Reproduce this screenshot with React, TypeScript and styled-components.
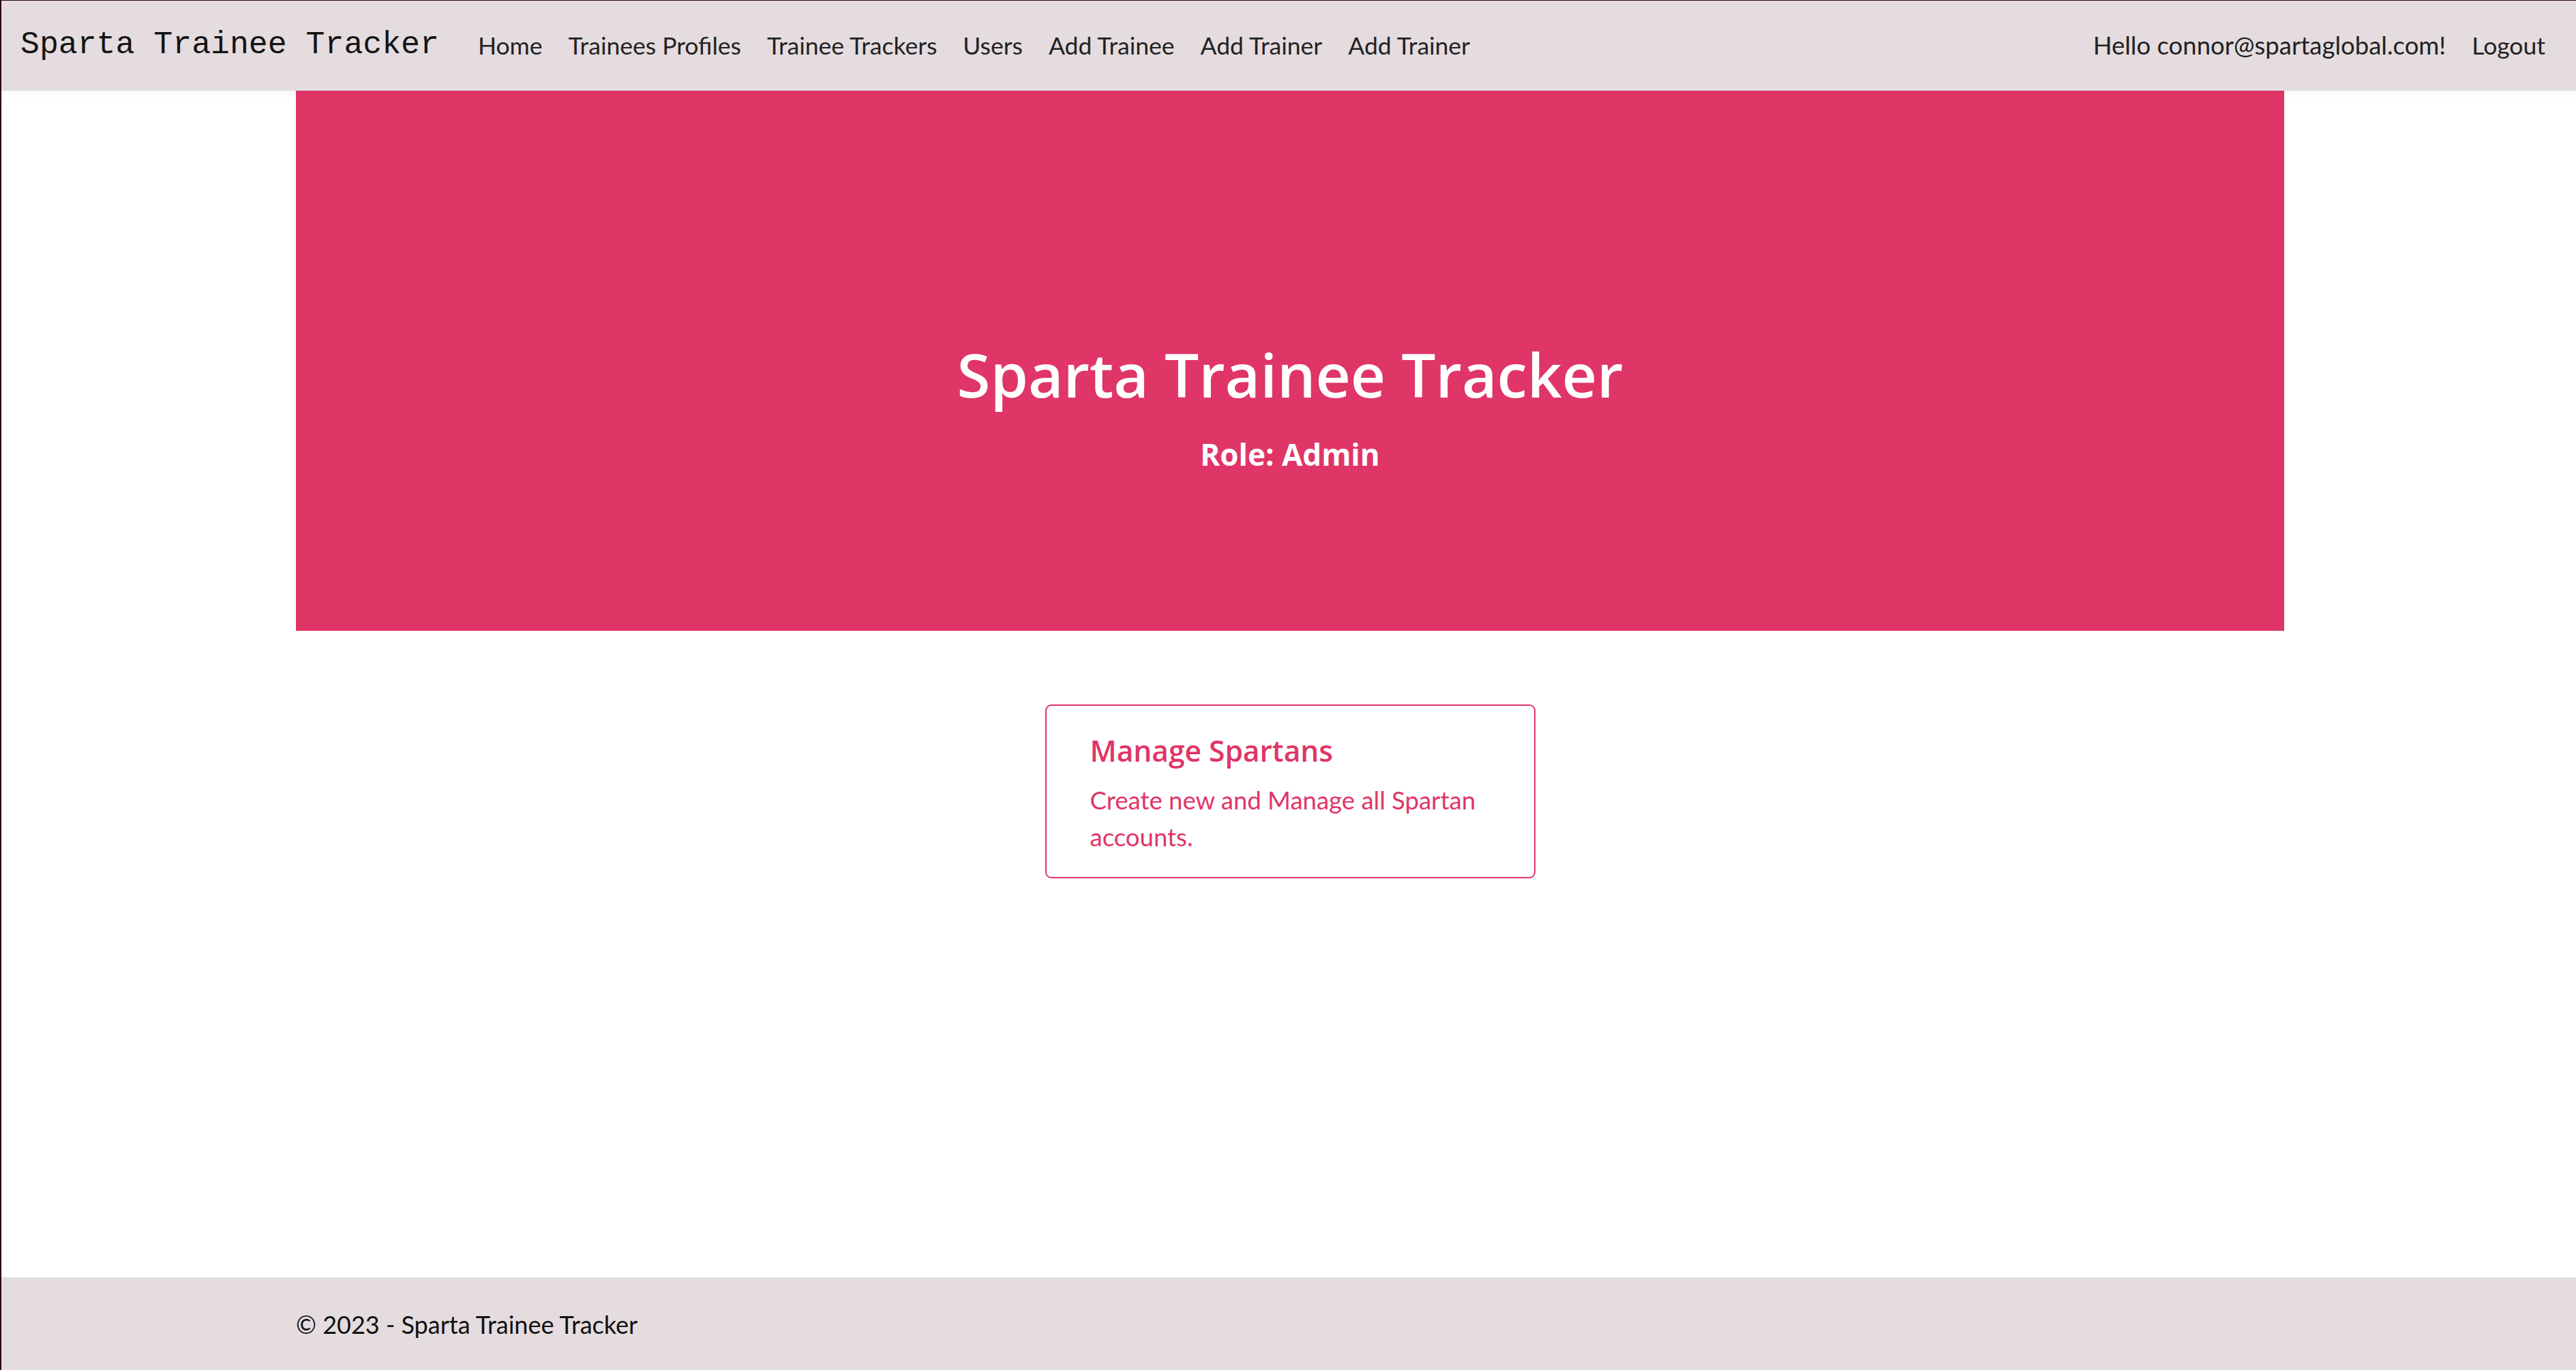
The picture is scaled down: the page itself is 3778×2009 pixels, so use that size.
import React from "react";
import styled, { createGlobalStyle } from "styled-components";

const GlobalStyle = createGlobalStyle`
  html, body { margin: 0; padding: 0; background: #ffffff; }
  body { font-family: "Lato", "Open Sans", sans-serif; }
  * { box-sizing: border-box; }
`;

const Page = styled.div`
  min-height: 2009px;
  display: flex;
  flex-direction: column;
  border-left: 2px solid #2a0606;
  border-top: 1px solid #2a0606;
`;

const Navbar = styled.nav`
  height: 132px;
  display: flex;
  align-items: center;
  padding: 0 26px 0 28px;
  background: #e4dcdf;
  border-bottom: 1px solid #d6dbe3;
  box-shadow: 0 4px 14px rgba(0, 0, 0, 0.04);
  position: relative;
  z-index: 1;
`;

const Brand = styled.a`
  font-family: "Liberation Mono", "DejaVu Sans Mono", monospace;
  font-size: 46.5px;
  color: #141414;
  margin-right: 38px;
  text-decoration: none;
  line-height: 1;
`;

const NavList = styled.ul`
  display: flex;
  list-style: none;
  margin: 0;
  padding: 0;
  align-items: center;
`;

const RightList = styled(NavList)`
  margin-left: auto;
`;

const NavLink = styled.a<{ $wide?: boolean }>`
  display: block;
  padding: 0 19px;
  font-family: "Lato", "Open Sans", sans-serif;
  font-size: ${(p) => (p.$wide ? "36.5px" : "35.5px")};
  color: #222;
  text-decoration: none;
  line-height: 1.5;
`;

const Main = styled.main`
  flex: 1;
  width: 2916px;
  margin: 0 0 0 calc(50% - 1456px);
  display: flex;
  flex-direction: column;
  align-items: center;
`;

const Hero = styled.section`
  align-self: stretch;
  height: 792px;
  background: #e03567;
  color: #fff;
  display: flex;
  flex-direction: column;
  align-items: center;
  justify-content: flex-start;
  padding-top: 363px;
`;

const HeroTitle = styled.h1`
  margin: 0;
  font-family: "Open Sans", sans-serif;
  font-size: 89px;
  font-weight: 600;
  line-height: 1.2;
`;

const HeroRole = styled.h5`
  margin: 37px 0 0;
  font-family: "Open Sans", sans-serif;
  font-size: 44px;
  font-weight: 700;
  line-height: 1.2;
`;

const Card = styled.a`
  margin-top: 108px;
  width: 719px;
  height: 255px;
  border: 2px solid #e03567;
  border-radius: 9px;
  padding: 40px 64px;
  color: #e03567;
  text-decoration: none;
  display: block;
`;

const CardTitle = styled.h5`
  margin: 0 0 20px;
  font-family: "Open Sans", sans-serif;
  font-size: 42.5px;
  font-weight: 600;
  line-height: 1.2;
`;

const CardText = styled.p`
  margin: 0;
  font-size: 36.5px;
  line-height: 54px;
`;

const Footer = styled.footer`
  height: 136px;
  background: #e4dcdf;
  border-top: 1px solid #dee2e6;
  display: flex;
  align-items: center;
`;

const FooterInner = styled.div`
  width: 2916px;
  margin: 0 0 0 calc(50% - 1456px);
  padding-top: 3px;
  font-size: 36px;
  line-height: 1.2;
  color: #111;
`;

const navItems = [
  "Home",
  "Trainees Profiles",
  "Trainee Trackers",
  "Users",
  "Add Trainee",
  "Add Trainer",
  "Add Trainer",
];

export default function App() {
  return (
    <>
      <GlobalStyle />
      <Page>
        <Navbar>
          <Brand href="#">Sparta Trainee Tracker</Brand>
          <NavList>
            {navItems.map((item, i) => (
              <li key={i}>
                <NavLink href="#">{item}</NavLink>
              </li>
            ))}
          </NavList>
          <RightList>
            <li>
              <NavLink href="#" $wide>
                Hello connor@spartaglobal.com!
              </NavLink>
            </li>
            <li>
              <NavLink href="#">Logout</NavLink>
            </li>
          </RightList>
        </Navbar>
        <Main>
          <Hero>
            <HeroTitle>Sparta Trainee Tracker</HeroTitle>
            <HeroRole>Role: Admin</HeroRole>
          </Hero>
          <Card href="#">
            <CardTitle>Manage Spartans</CardTitle>
            <CardText>Create new and Manage all Spartan accounts.</CardText>
          </Card>
        </Main>
        <Footer>
          <FooterInner>© 2023 - Sparta Trainee Tracker</FooterInner>
        </Footer>
      </Page>
    </>
  );
}
